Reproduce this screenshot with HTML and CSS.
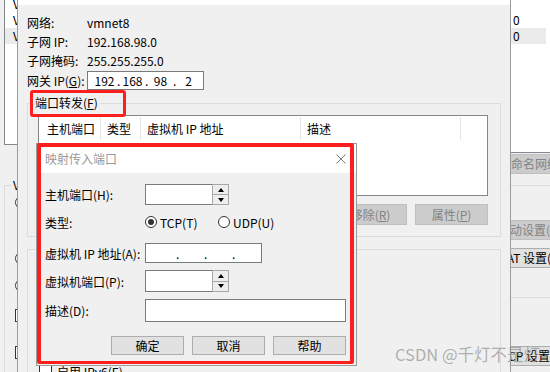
FILE: index.html
```html
<!DOCTYPE html>
<html lang="zh-CN">
<head>
<meta charset="utf-8">
<title>映射传入端口</title>
<link rel="stylesheet" href="styles.css">
</head>
<body>
<div class="desk">

  <!-- background: virtual network editor -->
  <div class="main-win">
    <div class="main-left">
      <div class="net-list">
        <div class="nl-row first">V</div>
        <div class="nl-row">V</div>
        <div class="nl-row sel">V</div>
      </div>
      <fieldset class="vm-group">
        <legend>V</legend>
        <span class="radio-part r1"></span>
        <span class="radio-part r2"></span>
        <span class="radio-part r3"></span>
        <span class="check-part c1"></span>
        <span class="check-part c2"></span>
      </fieldset>
    </div>
    <div class="main-right">
      <div class="net-list-r">
        <div class="nl-row first"></div>
        <div class="nl-row">0</div>
        <div class="nl-row sel">0</div>
      </div>
      <div class="rbtn dis rb-rename">重命名网络(W)...</div>
      <div class="r-line"></div>
      <div class="rbtn dis rb-auto">自动设置(U)...</div>
      <div class="rbtn rb-nat">NAT 设置(S)...</div>
      <div class="r-line r-line2"></div>
      <div class="rbtn rb-dhcp">DHCP 设置(P)...</div>
    </div>
  </div>

  <!-- NAT settings dialog -->
  <div class="nat">
    <div class="nat-title"></div>
    <div class="nat-body">
      <div class="info">
        <div class="info-row"><span class="info-label">网络:</span><span>vmnet8</span></div>
        <div class="info-row"><span class="info-label">子网 IP:</span><span>192.168.98.0</span></div>
        <div class="info-row"><span class="info-label">子网掩码:</span><span>255.255.255.0</span></div>
        <div class="info-row gw"><span class="info-label">网关 IP(<u class="mn">G</u>):</span>
          <div class="ip-box gw-box">
            <span class="ip-field">192</span><span class="ip-dot">.</span>
            <span class="ip-field">168</span><span class="ip-dot">.</span>
            <span class="ip-field">98</span><span class="ip-dot">.</span>
            <span class="ip-field">2</span>
          </div>
        </div>
      </div>

      <fieldset class="pf-group">
        <legend>端口转发(<u class="mn">F</u>)</legend>
        <div class="pf-list">
          <div class="pf-head">
            <span class="pf-col c1">主机端口</span>
            <span class="pf-col c2">类型</span>
            <span class="pf-col c3">虚拟机 IP 地址</span>
            <span class="pf-col c4">描述</span>
            <span class="pf-col c5"></span>
          </div>
        </div>
        <div class="pf-btns">
          <span class="btn"></span>
          <span class="btn dis">移除(<u class="mn">R</u>)</span>
          <span class="btn dis">属性(<u class="mn">P</u>)</span>
        </div>
      </fieldset>

      <div class="adv-group">
        <div class="cb-row"><span class="checkbox"></span><span>启用 IPv6(<u>E</u>)</span></div>
      </div>
    </div>
  </div>

  <!-- port mapping dialog -->
  <div class="map">
    <div class="map-title">
      <span>映射传入端口</span>
      <svg class="close" width="10" height="10" viewBox="0 0 10 10"><path d="M0.5 0.5 L9.5 9.5 M9.5 0.5 L0.5 9.5" stroke="#777" stroke-width="1" fill="none"/></svg>
    </div>
    <div class="map-body">
      <div class="frow r-host">
        <span class="flabel">主机端口(<u>H</u>):</span>
        <div class="spin">
          <span class="spin-input"></span>
          <span class="spin-btns"><span class="sb up"><i></i></span><span class="sb down"><i></i></span></span>
        </div>
      </div>
      <div class="frow r-type">
        <span class="flabel">类型:</span>
        <span class="radio on"></span><span class="rtext tcp">TCP(<u>T</u>)</span>
        <span class="radio"></span><span class="rtext">UDP(<u>U</u>)</span>
      </div>
      <div class="frow r-ip">
        <span class="flabel">虚拟机 IP 地址(<u>A</u>):</span>
        <div class="ip-box vm-box">
          <span class="ip-field"></span><span class="ip-dot">.</span>
          <span class="ip-field"></span><span class="ip-dot">.</span>
          <span class="ip-field"></span><span class="ip-dot">.</span>
          <span class="ip-field"></span>
        </div>
      </div>
      <div class="frow r-vmport">
        <span class="flabel">虚拟机端口(<u>P</u>):</span>
        <div class="spin tall">
          <span class="spin-input"></span>
          <span class="spin-btns"><span class="sb up"><i></i></span><span class="sb down"><i></i></span></span>
        </div>
      </div>
      <div class="frow r-desc">
        <span class="flabel">描述(<u>D</u>):</span>
        <span class="desc-input"></span>
      </div>
      <div class="map-btns">
        <span class="btn">确定</span>
        <span class="btn">取消</span>
        <span class="btn">帮助</span>
      </div>
    </div>
  </div>

  <!-- annotation marks -->
  <div class="mark mark-pf"></div>
  <div class="mark mark-dlg"></div>

  <div class="wm">CSDN @千灯不是灯</div>
</div>
</body>
</html>
```

FILE: styles.css
```css
* { box-sizing: border-box; }
html, body { margin: 0; padding: 0; }
body {
  width: 550px; height: 372px; overflow: hidden;
  background: #f0f0f0;
  font-family: "Noto Sans CJK SC", "Noto Sans", sans-serif;
  font-size: 12px; color: #000;
}
u { text-decoration: none; }
u.mn { text-decoration: underline; text-underline-offset: 1px; }
.desk { position: relative; width: 550px; height: 372px; overflow: hidden; }

/* ---------- background window ---------- */
.main-win { position: absolute; inset: 0; display: flex; justify-content: space-between; }
.main-left { width: 17px; overflow: hidden; display: flex; flex-direction: column; }
.net-list {
  flex: none; margin-left: 4px; width: 90px; height: 145px;
  background: #fff; border-left: 1px solid #828790; border-bottom: 1px solid #828790;
}
.nl-row { height: 16px; line-height: 16px; padding-left: 8px; white-space: nowrap; }
.nl-row.first { margin-top: -4px; }
.nl-row.sel { background: #ebebeb; }

.vm-group {
  flex: none; margin: 32px 0 0 4px; width: 90px; min-width: 0; height: 220px;
  border: 1px solid #dcdcdc; padding: 3px 0 0 10px;
  display: flex; flex-direction: column; align-items: flex-start;
}
.vm-group legend { padding: 0 2px; margin-left: -4px; line-height: 16px; white-space: nowrap; }
.radio-part { width: 13px; height: 13px; border: 1px solid #333; border-radius: 50%; background: #fff; }
.check-part { width: 13px; height: 13px; border: 1px solid #333; background: #fff; }
.r2 { margin-top: 43px; }
.r3 { margin-top: 14px; }
.c1 { margin-top: 17px; }
.c2 { margin-top: 24px; }

.main-right { width: 40px; overflow: hidden; display: flex; flex-direction: column; }
.net-list-r { flex: none; height: 153px; background: #fff; border-bottom: 1px solid #828790; }
.net-list-r .nl-row { padding-left: 3px; width: 36px; }
.rbtn {
  flex: none; margin-left: -20px; width: 110px; height: 20px; line-height: 18px;
  border: 1px solid #adadad; background: #e1e1e1; white-space: nowrap;
}
.rbtn.dis { background: #cccccc; border-color: #bfbfbf; color: #838383; }
.rb-rename { margin-top: 1px; padding-left: 8px; }
.r-line { flex: none; margin-top: 11px; height: 1px; background: #dcdcdc; }
.rb-auto { margin-top: 34px; padding-left: 7px; }
.rb-nat { margin-top: 8px; padding-left: 7px; }
.r-line2 { margin-top: 29px; }
.rb-dhcp { margin-top: 48px; padding-left: 0; }

/* ---------- NAT dialog ---------- */
.nat {
  position: absolute; left: 17px; top: -25px; width: 494px; height: 420px;
  background: #f0f0f0; border: 1px solid #9b9b9b;
}
.nat-title { height: 29px; background: #fff; }
.nat-body { padding: 8px 9px 0 9px; }
.info { display: flex; flex-direction: column; }
.info-row { display: flex; align-items: center; height: 19px; white-space: nowrap; }
.info-row.gw { height: 20px; }
.info-label { width: 60px; flex: none; }
.ip-box {
  display: flex; align-items: center; background: #fff; border: 1px solid #7a7a7a;
  padding-left: 4px;
}
.gw-box { width: 117px; height: 19px; }
.ip-field { width: 25px; text-align: center; }
.ip-dot { width: 3px; text-align: center; }

.pf-group {
  margin: 6px 0 0 0; width: 474px; min-width: 0;
  border: 1px solid #dcdcdc; padding: 5px 12px 11px 10px;
}
.pf-group legend { padding: 0 2px; margin-left: -5px; line-height: 14px; }
.pf-list { width: 450px; height: 81px; background: #fff; border: 1px solid #828790; }
.pf-head { display: flex; height: 24px; }
.pf-col {
  display: flex; align-items: center; border-right: 1px solid #e5e5e5;
  padding-left: 6px; white-space: nowrap; margin-top: 1px;
}
.pf-col.c1 { width: 62px; padding-left: 8px; }
.pf-col.c2 { width: 40px; }
.pf-col.c3 { width: 160px; }
.pf-col.c4 { width: 160px; }
.pf-col.c5 { flex: 1; border-right: none; }
.pf-btns { display: flex; justify-content: flex-end; gap: 8px; margin-top: 8px; }

.btn {
  display: flex; align-items: center; justify-content: center;
  width: 73px; height: 21px; border: 1px solid #adadad; background: #e1e1e1;
  white-space: nowrap;
}
.btn.dis { background: #cccccc; border-color: #bfbfbf; color: #838383; }

.adv-group {
  margin-top: 12px; width: 474px; height: 140px;
  border: 1px solid #dcdcdc; border-bottom: none; padding: 114px 0 0 11px;
}
.cb-row { display: flex; align-items: center; gap: 5px; height: 14px; }
.checkbox { width: 13px; height: 13px; border: 1px solid #333; background: #fff; }

/* ---------- mapping dialog ---------- */
.map {
  position: absolute; left: 36px; top: 143px; width: 321px; height: 223px;
  background: #f0f0f0; border: 1px solid #9a9a9a;
}
.map-title {
  height: 29px; background: #fff; display: flex; align-items: center;
  justify-content: space-between; padding: 0 10px 0 8px; color: #999;
}
.map-body { padding: 11px 10px 0 8px; display: flex; flex-direction: column; }
.frow { display: flex; align-items: center; }
.flabel { width: 100px; flex: none; white-space: nowrap; }
.r-host { height: 21px; }
.r-type { height: 16px; margin-top: 9px; }
.r-ip { height: 20px; margin-top: 13px; }
.r-vmport { height: 22px; margin-top: 7px; }
.r-desc { height: 23px; margin-top: 7px; }

.spin { display: flex; height: 21px; }
.spin.tall { height: 22px; }
.spin-input { width: 67px; background: #fff; border: 1px solid #7a7a7a; border-right: none; }
.spin-btns { width: 17px; display: flex; flex-direction: column; }
.sb {
  flex: 1; display: flex; align-items: center; justify-content: center;
  background: #eeeeee; border: 1px solid #a8a8a8;
}
.sb.down { border-top: none; }
.sb i { width: 0; height: 0; border-left: 3.5px solid transparent; border-right: 3.5px solid transparent; }
.sb.up i { border-bottom: 4px solid #000; }
.sb.down i { border-top: 4px solid #000; }

.radio {
  width: 12px; height: 12px; border: 1px solid #333; border-radius: 50%; background: #fff;
  display: flex; align-items: center; justify-content: center; flex: none;
}
.radio.on::after { content: ""; width: 6px; height: 6px; border-radius: 50%; background: #333; }
.rtext { margin-left: 3px; white-space: nowrap; }
.rtext.tcp { width: 58px; }

.vm-box { width: 117px; height: 20px; padding-left: 5px; }
.desc-input { width: 202px; height: 23px; background: #fff; border: 1px solid #7a7a7a; }

.map-btns { display: flex; justify-content: flex-end; gap: 8px; margin-top: 14px; }
.map-btns .btn { height: 19px; }

/* ---------- annotations ---------- */
.mark { position: absolute; border: 3px solid #fd1e1e; border-radius: 3px; }
.mark-pf { left: 30px; top: 90px; width: 96px; height: 27px; }
.mark-dlg { left: 37px; top: 143px; width: 317px; height: 221px; border-width: 4px 4px 3px 4px; border-radius: 2px; }

.wm {
  position: absolute; left: 395px; top: 343px; font-size: 16.5px; line-height: 22px;
  color: rgba(130, 130, 130, 0.6); white-space: nowrap;
}
```
